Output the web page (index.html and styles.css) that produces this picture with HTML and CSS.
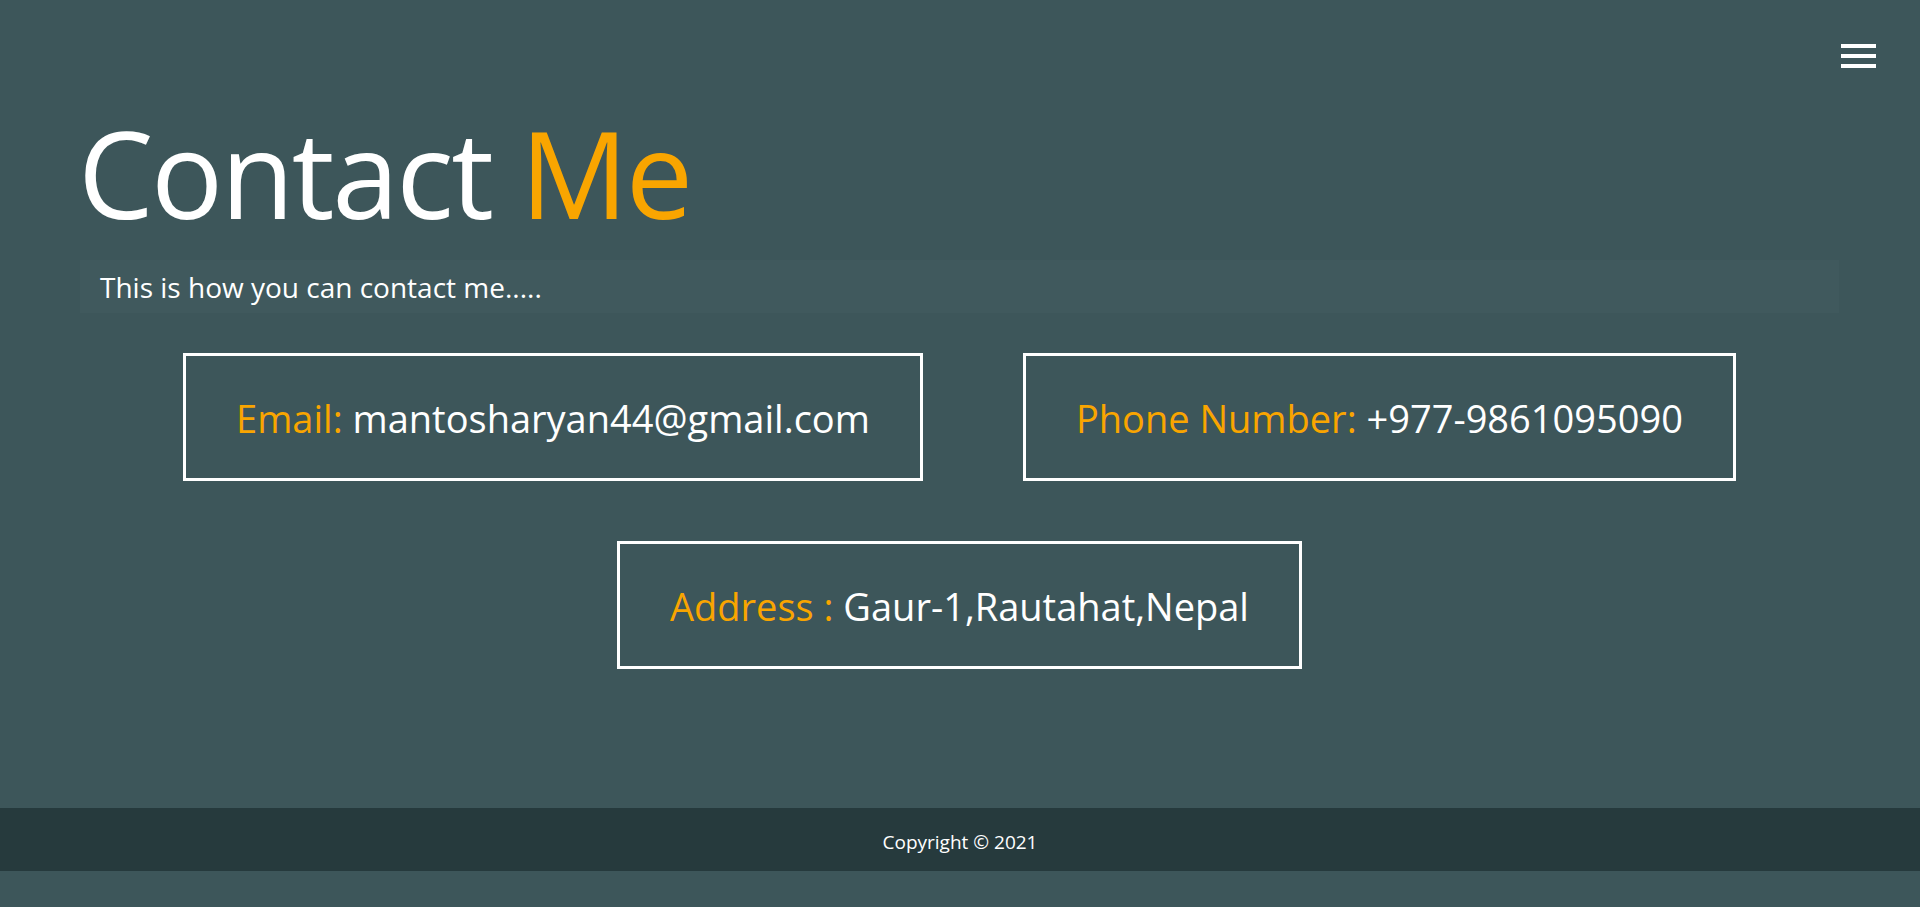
FILE: index.html
```html
<!DOCTYPE html>
<html lang="en">
<head>
<meta charset="utf-8">
<title>Contact Me</title>
<link rel="stylesheet" href="styles.css">
</head>
<body>
<header class="topbar">
  <button class="menu" aria-label="Menu">
    <span class="menu-bar"></span>
    <span class="menu-bar"></span>
    <span class="menu-bar"></span>
  </button>
</header>
<main class="contact">
  <h1 class="title">Contact <span class="accent">Me</span></h1>
  <p class="lead">This is how you can contact me.....</p>
  <div class="cards">
    <div class="row">
      <div class="card"><span class="accent">Email:</span> mantosharyan44@gmail.com</div>
      <div class="card"><span class="accent">Phone Number:</span> +977-9861095090</div>
    </div>
    <div class="row">
      <div class="card"><span class="accent">Address :</span> Gaur-1,Rautahat,Nepal</div>
    </div>
  </div>
</main>
<footer class="footer">Copyright © 2021</footer>
</body>
</html>
```
FILE: styles.css
```css
html, body {
  margin: 0;
  padding: 0;
  background: #3d565a;
}
body {
  font-family: "Open Sans", "Noto Sans", sans-serif;
  color: #ffffff;
}
.accent {
  color: #f9a500;
}
.topbar {
  display: flex;
  justify-content: flex-end;
  padding: 44px 44px 0 0;
}
.menu {
  display: flex;
  flex-direction: column;
  gap: 6px;
  padding: 0;
  margin: 0;
  border: 0;
  background: transparent;
  cursor: pointer;
}
.menu-bar {
  display: block;
  width: 35px;
  height: 4px;
  background: #ffffff;
}
.contact {
  padding: 0 81px 0 80px;
}
.title {
  margin: 45px 0 0 -2px;
  font-size: 120px;
  line-height: 120px;
  font-weight: 400;
  letter-spacing: -2.5px;
}
.lead {
  margin: 27px 0 0 0;
  height: 53px;
  padding: 1px 20px 0;
  box-sizing: border-box;
  background: #40595d;
  font-size: 28px;
  line-height: 52px;
}
.cards {
  display: flex;
  flex-direction: column;
  gap: 60px;
  margin-top: 40px;
}
.row {
  display: flex;
  justify-content: center;
  gap: 100px;
}
.card {
  border: 3px solid #ffffff;
  padding: 37px 50px 35px;
  font-size: 38px;
  line-height: 50px;
  white-space: nowrap;
}
.footer {
  margin-top: 139px;
  height: 63px;
  box-sizing: border-box;
  padding-top: 5px;
  background: #263a3d;
  text-align: center;
  font-size: 19px;
  line-height: 58px;
}
```
